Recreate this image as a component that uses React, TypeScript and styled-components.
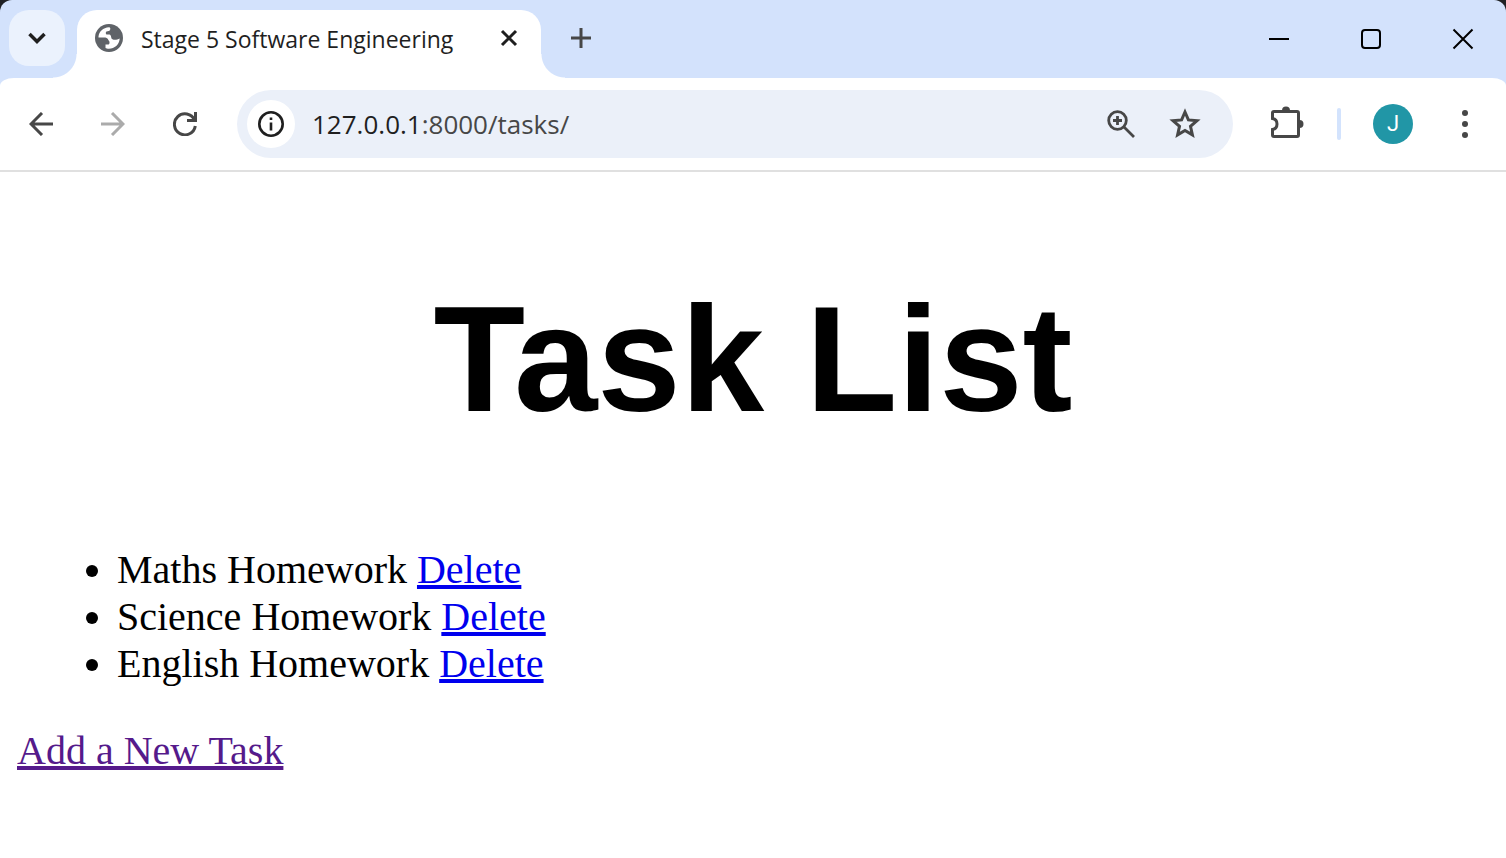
import React from "react";
import styled, { createGlobalStyle } from "styled-components";

const GlobalStyle = createGlobalStyle`
  *, *::before, *::after { box-sizing: border-box; }
  body {
    margin: 0;
    background: #202124;
    font-family: "Open Sans", "Noto Sans", sans-serif;
  }
`;

const Window = styled.div`
  display: flex;
  flex-direction: column;
  min-height: 100vh;
  background: #d3e2fc;
  border-radius: 12px 12px 0 0;
  overflow: hidden;
`;

const TabStrip = styled.header`
  display: flex;
  align-items: flex-start;
  height: 78px;
  padding: 10px 0 0 9px;
`;

const IconButton = styled.button<{ $w?: number; $h?: number; $color?: string }>`
  display: flex;
  flex: none;
  align-items: center;
  justify-content: center;
  width: ${(p) => p.$w ?? 56}px;
  height: ${(p) => p.$h ?? 56}px;
  padding: 0;
  border: 0;
  background: none;
  color: ${(p) => p.$color ?? "#474747"};
`;

const TabSearch = styled(IconButton)`
  border-radius: 20px;
  background: #ebf2fd;
`;

const Tab = styled.div`
  position: relative;
  display: flex;
  align-items: center;
  width: 464px;
  height: 68px;
  margin-left: 12px;
  padding: 0 20px 12px 18px;
  border-radius: 20px 20px 0 0;
  background: #fff;

  &::before,
  &::after {
    content: "";
    position: absolute;
    bottom: 0;
    width: 24px;
    height: 24px;
  }
  &::before {
    right: 100%;
    background: radial-gradient(circle at 0 0, transparent 23px, #fff 24px);
  }
  &::after {
    left: 100%;
    background: radial-gradient(circle at 100% 0, transparent 23px, #fff 24px);
  }
`;

const TabTitle = styled.span`
  flex: 1;
  margin-left: 18px;
  padding-top: 2px;
  color: #1f1f1f;
  font: 23px/32px "Open Sans", "Noto Sans", sans-serif;
  white-space: nowrap;
`;

const WindowControls = styled.div`
  display: flex;
  gap: 6px;
  margin-left: auto;
`;

const Toolbar = styled.nav`
  display: flex;
  align-items: center;
  height: 94px;
  padding: 0 13px;
  border-bottom: 2px solid #e0e0e0;
  border-radius: 14px 14px 0 0 / 8px 8px 0 0;
  background: #fff;
`;

const NavButtons = styled.div`
  display: flex;
  gap: 16px;
`;

const AddressBar = styled.div`
  display: flex;
  flex: 1;
  align-items: center;
  height: 68px;
  margin: 0 26px 0 24px;
  padding: 0 20px 0 10px;
  border-radius: 34px;
  background: #ebf0f9;
`;

const SiteInfo = styled(IconButton)`
  border-radius: 50%;
  background: #fff;
`;

const Address = styled.div`
  flex: 1;
  margin-left: 17px;
  color: #474747;
  font: 26px/34px "Open Sans", "Noto Sans", sans-serif;

  b {
    color: #1f1f1f;
    font-weight: 400;
  }
`;

const Divider = styled.span`
  width: 4px;
  height: 32px;
  margin: 0 32px 0 22px;
  border-radius: 2px;
  background: #d3e3fd;
`;

const Avatar = styled.button`
  width: 40px;
  height: 40px;
  margin-right: 24px;
  padding: 0;
  border: 0;
  border-radius: 50%;
  background: #2196a6;
  color: #fff;
  font: 22px/40px Roboto, sans-serif;
`;

const Page = styled.main`
  flex: 1;
  padding: 0 17px;
  background: #fff;
  color: #000;
  font: 40px/47px "Liberation Serif", "Times New Roman", serif;
`;

const Heading = styled.h1`
  margin: 0;
  padding: 101px 0;
  font: bold 150px/172px "Liberation Sans", Arial, sans-serif;
  text-align: center;
`;

const TaskList = styled.ul`
  margin: 0 0 40px;
  padding: 0 0 0 100px;
`;

const Link = styled.a<{ $visited?: boolean }>`
  color: ${(p) => (p.$visited ? "#551a8b" : "#0000ee")};
  text-decoration: underline;
  text-decoration-thickness: 4px;
`;

const tasks = ["Maths Homework", "Science Homework", "English Homework"];

const stroke = { fill: "none", stroke: "currentColor" };

const GlobeIcon = () => (
  <svg width="28" height="28" viewBox="0 0 28 28" aria-hidden="true">
    <circle cx="14" cy="14" r="14" fill="#5f6368" />
    <path
      fill="#fff"
      d="M3.500 12.500C4 7.500 8 3.500 14 3.200C15.500 3.300 15.600 5 15 6C14.500 7.200 13 7.300 11.500 7.500C10.500 8 10.700 10 11.500 10.500H14.500C16 10.800 16 13 16.500 14.500C18 16.500 22 16 24.700 14.500C24.300 20.500 19.500 24.800 14 24.800C12.500 24.800 11 24.500 10.500 24V20.500H13.500C15 20 14.800 17 13.500 16.200C12.500 14 11 13.500 9 13.500H3.500Z"
    />
  </svg>
);

export default function App() {
  return (
    <>
      <GlobalStyle />
      <Window>
        <TabStrip>
          <TabSearch aria-label="Search tabs" $color="#1f1f1f">
            <svg width="20" height="20" viewBox="0 0 20 20" {...stroke} strokeWidth="3.500">
              <path d="M2.500 6 10 13.500 17.500 6" />
            </svg>
          </TabSearch>
          <Tab>
            <GlobeIcon />
            <TabTitle>Stage 5 Software Engineering</TabTitle>
            <IconButton $w={24} $h={24} $color="#1f1f1f" aria-label="Close tab">
              <svg width="18" height="18" viewBox="0 0 18 18" {...stroke} strokeWidth="3">
                <path d="M2 2 16 16M16 2 2 16" />
              </svg>
            </IconButton>
          </Tab>
          <IconButton $w={80} aria-label="New tab">
            <svg width="20" height="20" viewBox="0 0 20 20" {...stroke} strokeWidth="3">
              <path d="M10 0V20M0 10H20" />
            </svg>
          </IconButton>
          <WindowControls>
            <IconButton $w={86} $h={58} $color="#000" aria-label="Minimise">
              <svg width="20" height="20" viewBox="0 0 20 20" {...stroke} strokeWidth="2">
                <path d="M0 10H20" />
              </svg>
            </IconButton>
            <IconButton $w={86} $h={58} $color="#000" aria-label="Maximise">
              <svg width="20" height="20" viewBox="0 0 20 20" {...stroke} strokeWidth="2">
                <rect x="1" y="1" width="18" height="18" rx="3" />
              </svg>
            </IconButton>
            <IconButton $w={86} $h={58} $color="#000" aria-label="Close">
              <svg width="22" height="22" viewBox="0 0 22 22" {...stroke} strokeWidth="2">
                <path d="M1.500 1.500 20.500 20.500M20.500 1.500 1.500 20.500" />
              </svg>
            </IconButton>
          </WindowControls>
        </TabStrip>

        <Toolbar>
          <NavButtons>
            <IconButton aria-label="Back">
              <svg width="24" height="24" viewBox="0 0 24 24" {...stroke} strokeWidth="3">
                <path d="M24 12H2M13 1 2 12 13 23" />
              </svg>
            </IconButton>
            <IconButton aria-label="Forward" $color="#ababab">
              <svg width="24" height="24" viewBox="0 0 24 24" {...stroke} strokeWidth="3">
                <path d="M0 12H22M11 1 22 12 11 23" />
              </svg>
            </IconButton>
            <IconButton aria-label="Reload">
              <svg width="24" height="24" viewBox="0 0 24 24" {...stroke} strokeWidth="3">
                <path d="M22.500 0V8.500H14M21.500 8A10.500 10.500 0 1 0 22.300 14" />
              </svg>
            </IconButton>
          </NavButtons>
          <AddressBar>
            <SiteInfo $w={48} $h={48} $color="#1f1f1f" aria-label="View site information">
              <svg width="26" height="26" viewBox="0 0 26 26" {...stroke} strokeWidth="2.600">
                <circle cx="13" cy="13" r="11.700" />
                <path d="M13 11.500V19.500M13 6.500V9" />
              </svg>
            </SiteInfo>
            <Address>
              <b>127.0.0.1</b>:8000/tasks/
            </Address>
            <IconButton $w={72} aria-label="Zoom">
              <svg width="28" height="28" viewBox="0 0 28 28" {...stroke} strokeWidth="2.800">
                <circle cx="10.500" cy="10.500" r="8.800" />
                <path d="M17 17 27 27M10.500 6V15M6 10.500H15" />
              </svg>
            </IconButton>
            <IconButton $w={56} aria-label="Bookmark this page">
              <svg width="32" height="32" viewBox="0 0 32 32" {...stroke} strokeWidth="3">
                <path d="M16 4 19.400 11.900 28 12.700 21.500 18.400 23.400 26.900 16 22.400 8.600 26.900 10.500 18.400 4 12.700 12.600 11.900Z" />
              </svg>
            </IconButton>
          </AddressBar>
          <IconButton aria-label="Extensions">
            <svg width="34" height="38" viewBox="0 0 34 38" {...stroke} strokeWidth="3">
              <path d="M4 6.500H27Q28.500 6.500 28.500 8V30Q28.500 31.500 27 31.500H4Q2.500 31.500 2.500 30V24.500C8.500 23.500 8.500 14.500 2.500 13.500V8Q2.500 6.500 4 6.500Z" />
              <path fill="currentColor" stroke="none" d="M12 5.500A4 4 0 0 1 20 5.500ZM29.500 15A4 4 0 0 1 29.500 23Z" />
            </svg>
          </IconButton>
          <Divider />
          <Avatar aria-label="Profile J">J</Avatar>
          <IconButton aria-label="Menu">
            <svg width="6" height="28" viewBox="0 0 6 28" fill="currentColor">
              <circle cx="3" cy="3" r="3" />
              <circle cx="3" cy="14" r="3" />
              <circle cx="3" cy="25" r="3" />
            </svg>
          </IconButton>
        </Toolbar>

        <Page>
          <Heading>Task List</Heading>
          <TaskList>
            {tasks.map((task) => (
              <li key={task}>
                {task} <Link href="#delete">Delete</Link>
              </li>
            ))}
          </TaskList>
          <Link href="#add" $visited>
            Add a New Task
          </Link>
        </Page>
      </Window>
    </>
  );
}
